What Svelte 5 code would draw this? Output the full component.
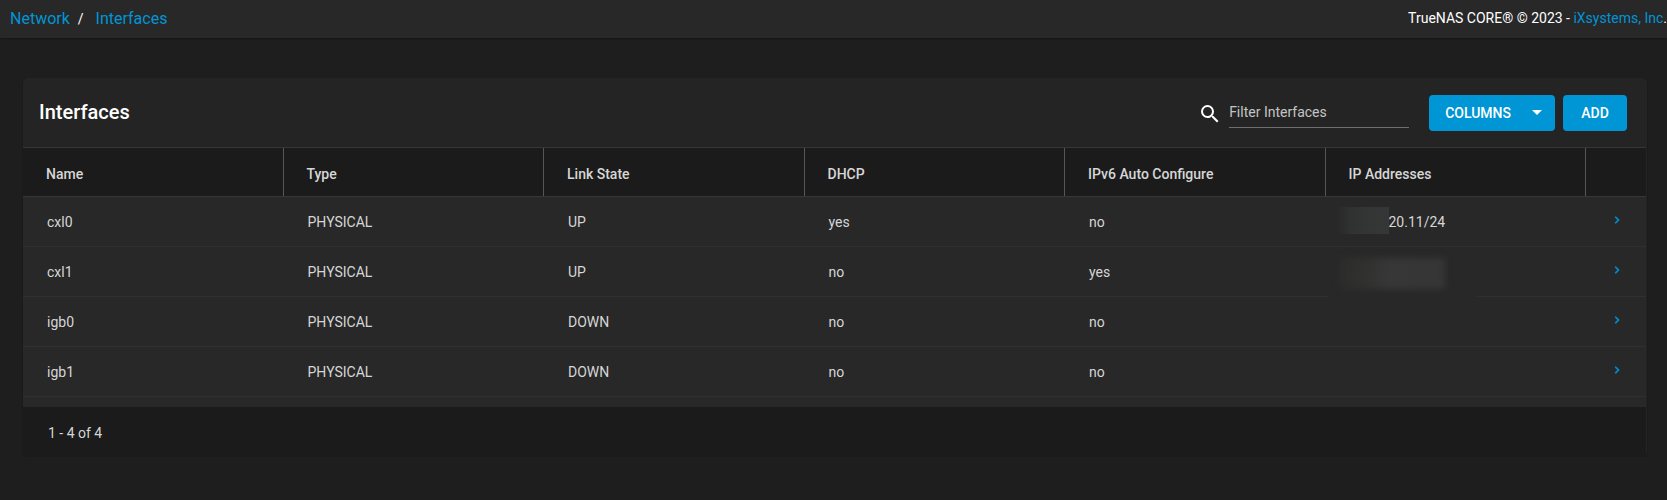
<script>
  const columns = ['Name', 'Type', 'Link State', 'DHCP', 'IPv6 Auto Configure', 'IP Addresses'];
  const rows = [
    { name: 'cxl0', type: 'PHYSICAL', link: 'UP', dhcp: 'yes', auto: 'no', ip: '20.11/24', cover: 'partial' },
    { name: 'cxl1', type: 'PHYSICAL', link: 'UP', dhcp: 'no', auto: 'yes', ip: '', cover: 'full' },
    { name: 'igb0', type: 'PHYSICAL', link: 'DOWN', dhcp: 'no', auto: 'no', ip: '', cover: '' },
    { name: 'igb1', type: 'PHYSICAL', link: 'DOWN', dhcp: 'no', auto: 'no', ip: '', cover: '' }
  ];
  let filter = $state('');
  let shown = $derived(rows.filter((r) => r.name.includes(filter.toLowerCase())));
</script>

<div class="page">
  <header class="topbar">
    <nav class="crumbs" aria-label="Breadcrumb">
      <a href="#network">Network</a>
      <span class="slash">/</span>
      <a href="#interfaces">Interfaces</a>
    </nav>
    <p class="copyright">TrueNAS CORE® © 2023 - <a href="#ixsystems">iXsystems, Inc</a>.</p>
  </header>

  <main class="card">
    <div class="toolbar">
      <h1>Interfaces</h1>
      <div class="search">
        <label for="filter" aria-label="Filter Interfaces">
          <svg width="24" height="24" viewBox="0 0 24 24" fill="#fff" aria-hidden="true">
            <path d="M15.5 14h-.79l-.28-.27A6.47 6.47 0 0 0 16 9.5 6.5 6.5 0 1 0 9.5 16c1.61 0 3.09-.59 4.23-1.57l.27.28v.79l5 4.99L20.49 19l-4.99-5zm-6 0C7.01 14 5 11.99 5 9.5S7.01 5 9.5 5 14 7.01 14 9.5 11.99 14 9.5 14z" />
          </svg>
        </label>
        <input id="filter" type="text" placeholder="Filter Interfaces" bind:value={filter} />
      </div>
      <div class="actions">
        <button class="btn columns" type="button">
          COLUMNS
          <svg width="24" height="24" viewBox="0 0 24 24" fill="#fff" aria-hidden="true"><path d="M7 9h10l-5 5z" /></svg>
        </button>
        <button class="btn add" type="button">ADD</button>
      </div>
    </div>

    <div class="body">
      <table>
        <thead>
          <tr>
            {#each columns as c}
              <th scope="col">{c}</th>
            {/each}
            <th class="expand" aria-label="Details"></th>
          </tr>
        </thead>
        <tbody>
          {#each shown as r}
            <tr>
              <td>{r.name}</td>
              <td>{r.type}</td>
              <td>{r.link}</td>
              <td>{r.dhcp}</td>
              <td>{r.auto}</td>
              <td class="ip">
                {#if r.cover === 'partial'}
                  <div class="address"><span class="patch"></span>{r.ip}</div>
                {:else if r.cover === 'full'}
                  <div class="veil"><span class="smudge"></span></div>
                {/if}
              </td>
              <td class="expand">
                <button type="button" aria-label="Expand {r.name}">
                  <svg width="14" height="14" viewBox="0 0 24 24" fill="#0095d5" stroke="#0095d5" aria-hidden="true"><path d="M8.59 16.58 13.17 12 8.59 7.41 10 6l6 6-6 6-1.41-1.42z" /></svg>
                </button>
              </td>
            </tr>
          {/each}
        </tbody>
      </table>
    </div>
    <footer>1 - 4 of 4</footer>
  </main>
</div>

<style>
  :global(body) {
    margin: 0;
    background: #1e1e1e;
  }
  .page {
    font-family: Roboto, sans-serif;
    font-size: 14px;
    line-height: 20px;
    color: #d6d6d6;
  }
  a {
    color: #0095d5;
    text-decoration: none;
  }
  .topbar {
    display: flex;
    justify-content: space-between;
    align-items: center;
    height: 38px;
    padding-left: 10px;
    background: #282828;
    box-shadow: 0 1px 2px rgba(0, 0, 0, 0.3);
  }
  .crumbs {
    display: flex;
    font-size: 16px;
  }
  .slash {
    margin: 0 12px 0 8px;
    font-size: 14px;
    color: #fff;
  }
  .copyright {
    margin: 0;
    line-height: 18px;
    padding-bottom: 2px;
    color: #fff;
  }
  .card {
    margin: 40px 20px 0 23px;
    background: #242424;
    border-radius: 5px;
    box-shadow: 0 1px 2px rgba(0, 0, 0, 0.35);
    overflow: hidden;
  }
  .toolbar {
    display: flex;
    align-items: center;
    height: 69px;
    padding: 0 20px 0 16px;
  }
  h1 {
    flex: 1;
    margin: 0;
    padding-bottom: 2px;
    font-size: 20px;
    font-weight: 500;
    color: #fff;
  }
  .search {
    display: flex;
    align-items: flex-end;
    gap: 7px;
    margin-right: 20px;
  }
  .search label {
    display: flex;
    padding-bottom: 2px;
  }
  input {
    width: 180px;
    height: 30px;
    padding: 0 0 1px;
    border: 0;
    border-bottom: 1px solid #6e6e6e;
    box-sizing: border-box;
    background: none;
    color: #d6d6d6;
    font: inherit;
    outline: none;
  }
  input::placeholder {
    color: #c4c4c4;
    opacity: 1;
  }
  .actions {
    display: flex;
    gap: 8px;
  }
  .btn {
    display: flex;
    align-items: center;
    justify-content: center;
    height: 36px;
    border: 0;
    border-radius: 4px;
    background: #0095d5;
    color: #fff;
    font: 500 14px/20px Roboto, sans-serif;
  }
  .columns {
    gap: 14px;
    padding: 0 6px 0 16px;
  }
  .add {
    min-width: 64px;
    padding: 0 16px;
  }
  .body {
    padding-bottom: 10px;
    margin-right: 1px;
    background: #282828;
  }
  table {
    width: 100%;
    table-layout: fixed;
    border-collapse: separate;
    border-spacing: 0;
  }
  th {
    position: relative;
    height: 44px;
    padding: 4px 23px 0;
    border-top: 1px solid #363636;
    border-bottom: 1px solid #363636;
    background: #1b1b1b;
    background-clip: padding-box;
    font-weight: 500;
    text-align: left;
  }
  th:not(.expand)::after {
    content: '';
    position: absolute;
    top: 0;
    right: 0;
    bottom: 0;
    width: 1px;
    background: #565656;
  }
  td {
    height: 49px;
    padding: 0 24px;
    border-bottom: 1px solid #303030;
  }
  th.expand,
  td.expand {
    width: 60px;
    padding-left: 0;
    padding-right: 0;
    box-sizing: border-box;
  }
  td.expand {
    height: 50px;
  }
  td.expand button {
    display: flex;
    margin: 0 0 4px 24px;
    padding: 0;
    border: 0;
    background: none;
  }
  td.ip {
    position: relative;
    padding: 0 12px;
  }
  .address {
    display: flex;
    align-items: center;
  }
  .patch {
    width: 51px;
    height: 27px;
    margin-bottom: 2px;
    background: linear-gradient(90deg, #292929, #303131 25%, #343636 60%, #353737);
  }
  .veil {
    position: absolute;
    top: 2px;
    left: 2px;
    bottom: -1px;
    width: 149px;
    padding: 9px 12px;
    box-sizing: border-box;
    background: #282828;
  }
  .smudge {
    display: block;
    width: 105px;
    height: 31px;
    background: linear-gradient(90deg, #2c2c2c, #323231 30%, #373737 45%, #363636);
    filter: blur(3px);
  }
  footer {
    display: flex;
    align-items: center;
    height: 48px;
    margin-right: 1px;
    padding: 2px 0 0 25px;
    background: #1b1b1b;
  }
</style>
